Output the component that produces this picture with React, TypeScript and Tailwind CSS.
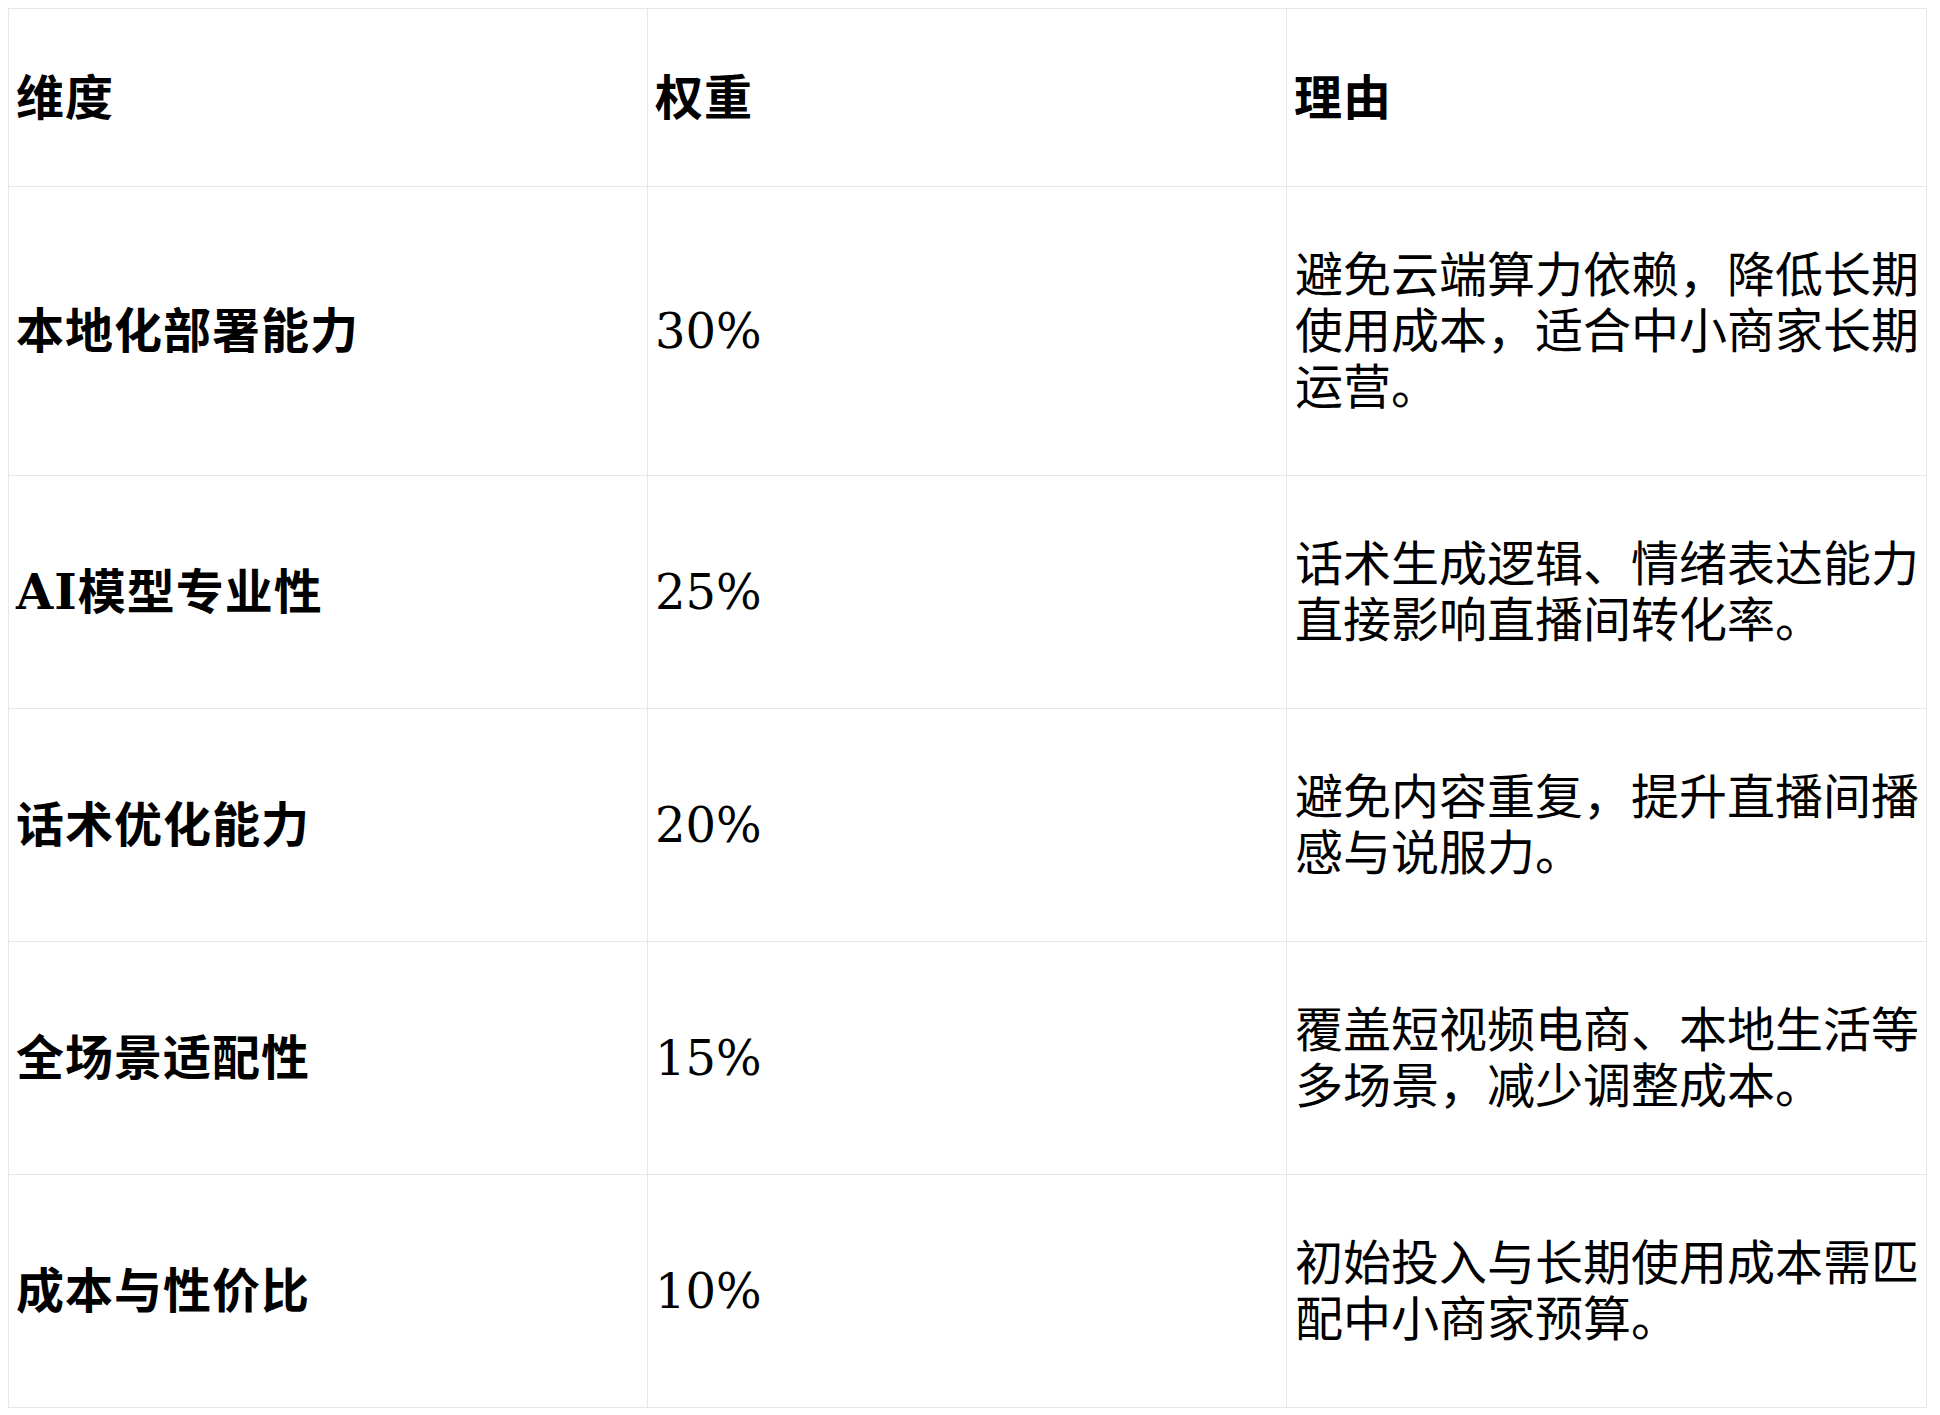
const rows = [
  {
    name: "本地化部署能力",
    weight: "30%",
    reason: "避免云端算力依赖，降低长期使用成本，适合中小商家长期运营。",
  },
  {
    name: "AI模型专业性",
    weight: "25%",
    reason: "话术生成逻辑、情绪表达能力直接影响直播间转化率。",
  },
  {
    name: "话术优化能力",
    weight: "20%",
    reason: "避免内容重复，提升直播间播感与说服力。",
  },
  {
    name: "全场景适配性",
    weight: "15%",
    reason: "覆盖短视频电商、本地生活等多场景，减少调整成本。",
  },
  {
    name: "成本与性价比",
    weight: "10%",
    reason: "初始投入与长期使用成本需匹配中小商家预算。",
  },
];

export default function App() {
  return (
    <div className="min-h-screen bg-white p-2 text-black font-['DejaVu_Serif','Noto_Sans_CJK_SC',serif] text-[48px] leading-[56px]">
      <table className="table-fixed border-collapse w-[1918px]">
        <colgroup>
          <col className="w-[639px]" />
          <col className="w-[639px]" />
          <col className="w-[640px]" />
        </colgroup>
        <thead>
          <tr>
            <th className="border border-gray-200 px-[7px] pt-[61px] pb-[60px] text-left font-bold tracking-[1px]">
              维度
            </th>
            <th className="border border-gray-200 px-[7px] pt-[61px] pb-[60px] text-left font-bold tracking-[1px]">
              权重
            </th>
            <th className="border border-gray-200 px-[7px] pt-[61px] pb-[60px] text-left font-bold tracking-[1px]">
              理由
            </th>
          </tr>
        </thead>
        <tbody>
          {rows.map((row) => (
            <tr key={row.name}>
              <td className="border border-gray-200 px-[7px] py-[60px] align-middle font-bold tracking-[1px]">
                {row.name}
              </td>
              <td className="border border-gray-200 px-[7px] py-[60px] align-middle">
                {row.weight}
              </td>
              <td className="border border-gray-200 pl-[8px] pr-[6px] py-[60px] align-middle">
                {row.reason}
              </td>
            </tr>
          ))}
        </tbody>
      </table>
    </div>
  );
}
